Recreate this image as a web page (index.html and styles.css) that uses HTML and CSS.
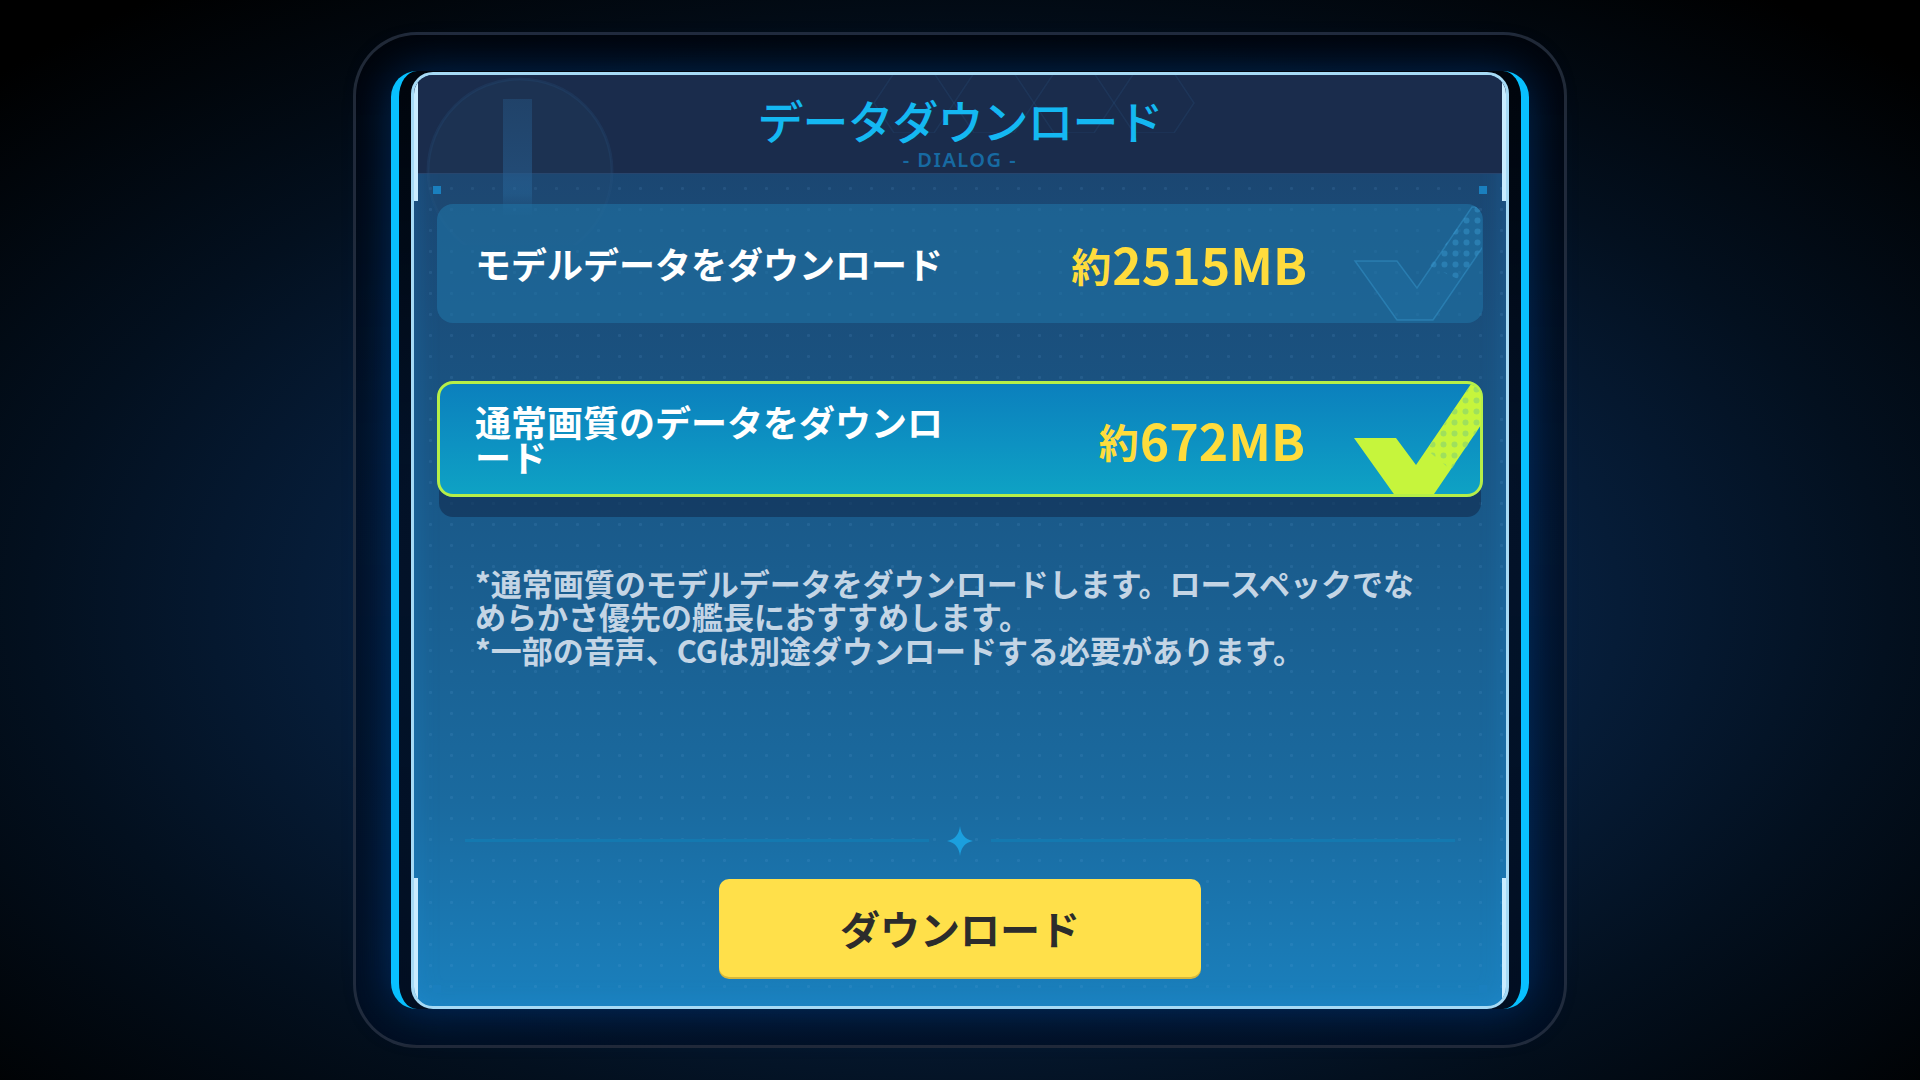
FILE: index.html
```html
<!DOCTYPE html>
<html lang="ja">
<head>
    <meta charset="UTF-8">
    <meta name="viewport" content="width=device-width, initial-scale=1.0">
    <title>データダウンロード</title>
    <link rel="stylesheet" href="styles.css">
</head>
<body>

    <div class="frame">
        <div class="shell">
            <div class="panel">
                <div class="panel-head">
                    <h1 class="title">データダウンロード</h1>
                    <div class="subtitle">- DIALOG -</div>
                </div>

                <!-- faint emblem and hex pattern over the header -->
                <svg class="emblem" width="220" height="170" viewBox="0 0 220 170">
                    <defs>
                        <linearGradient id="barFade" x1="0" y1="0" x2="0" y2="1">
                            <stop offset="0" stop-color="#24507c" stop-opacity="0.55"/>
                            <stop offset="0.65" stop-color="#275f92" stop-opacity="0.55"/>
                            <stop offset="0.8" stop-color="#2b73aa" stop-opacity="0.35"/>
                            <stop offset="1" stop-color="#2b73aa" stop-opacity="0"/>
                        </linearGradient>
                    </defs>
                    <circle cx="106" cy="96" r="92" fill="#27496f" fill-opacity="0.2" stroke="#2a5582" stroke-opacity="0.22" stroke-width="3"/>
                    <rect x="89" y="24" width="29" height="118" fill="url(#barFade)"/>
                </svg>
                <svg class="hexes" width="360" height="60" viewBox="0 0 360 60">
                    <g fill="none" stroke="#2d5a8a" stroke-opacity="0.2" stroke-width="1.5">
                        <path d="M20 30 L40 0 L80 0 L100 30 L80 60 L40 60 Z"/>
                        <path d="M100 30 L120 0 L160 0 L180 30 L160 60 L120 60 Z"/>
                        <path d="M180 30 L200 0 L240 0 L260 30 L240 60 L200 60 Z"/>
                        <path d="M260 30 L280 0 L320 0 L340 30 L320 60 L280 60 Z"/>
                    </g>
                </svg>

                <span class="pin pin-tl"></span>
                <span class="pin pin-tr"></span>
                <span class="pin pin-bl"></span>
                <span class="pin pin-br"></span>

                <div class="panel-body">
                    <div class="option">
                        <div class="option-label">モデルデータをダウンロード</div>
                        <div class="option-size"><span class="approx">約</span>2515MB</div>
                        <svg class="check check-off" width="142" height="119" viewBox="0 0 142 119">
                            <defs>
                                <pattern id="dotsOff" width="11" height="11" patternUnits="userSpaceOnUse">
                                    <circle cx="5.5" cy="5.5" r="3" fill="#3a9ad0" fill-opacity="0.45"/>
                                </pattern>
                            </defs>
                            <polygon points="15,57 57,57 77,84 132,3 170,3 93,116 57,116" fill="#2a86bd" fill-opacity="0.15" stroke="#3d9fd6" stroke-opacity="0.4" stroke-width="1.5"/>
                            <polygon points="90,62 132,3 170,3 120,76" fill="url(#dotsOff)"/>
                        </svg>
                    </div>

                    <div class="option option-on">
                        <div class="option-label">通常画質のデータをダウンロード</div>
                        <div class="option-size"><span class="approx">約</span>672MB</div>
                        <svg class="check check-on" width="142" height="110" viewBox="0 0 142 110">
                            <defs>
                                <pattern id="dotsOn" width="11" height="11" patternUnits="userSpaceOnUse">
                                    <circle cx="5.5" cy="5.5" r="3" fill="#8fd86a" fill-opacity="0.7"/>
                                </pattern>
                            </defs>
                            <polygon points="15,54 57,54 77,81 132,0 170,0 93,113 57,113" fill="#c6f53c"/>
                            <polygon points="88,66 132,0 170,0 112,86" fill="url(#dotsOn)"/>
                        </svg>
                    </div>

                    <p class="note">*通常画質のモデルデータをダウンロードします。ロースペックでなめらかさ優先の艦長におすすめします。<br>*一部の音声、CGは別途ダウンロードする必要があります。</p>

                    <div class="divider">
                        <span class="divider-line"></span>
                        <svg class="divider-star" width="26" height="30" viewBox="0 0 26 30">
                            <path d="M13 0 Q14.5 13 26 15 Q14.5 17 13 30 Q11.5 17 0 15 Q11.5 13 13 0 Z" fill="#1b9fde"/>
                        </svg>
                        <span class="divider-line"></span>
                    </div>

                    <button class="download-btn">ダウンロード</button>
                </div>
            </div>
        </div>
    </div>

</body>
</html>
```

FILE: styles.css
```css
body {
    margin: 0;
    height: 1080px;
    display: flex;
    justify-content: center;
    align-items: center;
    font-family: "Noto Sans CJK JP", "Noto Sans", sans-serif;
    background: radial-gradient(ellipse 78% 78% at 50% 56%, #0c2d56 0%, #07203f 38%, #03101f 62%, #000 90%);
    overflow: hidden;
}

/* thin dark outer rim */
.frame {
    box-sizing: border-box;
    width: 1214px;
    height: 1016px;
    border: 3px solid rgba(44, 54, 70, 0.75);
    border-radius: 64px;
    display: flex;
    justify-content: center;
    align-items: center;
    background: linear-gradient(180deg, rgba(0, 4, 10, 0.85) 0%, rgba(1, 12, 30, 0.7) 40%, rgba(1, 14, 34, 0.75) 100%);
}

/* cyan side rails */
.shell {
    box-sizing: border-box;
    width: 1138px;
    height: 938px;
    padding: 0 12px;
    border-left: 8px solid #08c0ff;
    border-right: 8px solid #08c0ff;
    border-radius: 26px;
    box-shadow: 0 0 46px rgba(0, 110, 230, 0.35);
    display: flex;
    align-items: center;
}

.panel {
    position: relative;
    box-sizing: border-box;
    width: 1098px;
    height: 937px;
    border: 3px solid #a6daf5;
    border-radius: 22px;
    overflow: hidden;
    display: flex;
    flex-direction: column;
    background: linear-gradient(180deg, #1b416b 0%, #1a5685 40%, #1a6a9f 78%, #1a80bd 100%);
    box-shadow: inset 0 0 24px rgba(40, 150, 230, 0.25);
}

/* thicker light edges at the top and bottom ends of the sides */
.panel::before,
.panel::after {
    content: "";
    position: absolute;
    left: 0;
    right: 0;
    border-left: 4px solid #c9ecff;
    border-right: 4px solid #c9ecff;
    pointer-events: none;
    z-index: 3;
}

.panel::before {
    top: 0;
    height: 126px;
}

.panel::after {
    bottom: 0;
    height: 128px;
}

.emblem {
    position: absolute;
    left: 0;
    top: 0;
    z-index: 1;
    pointer-events: none;
}

.hexes {
    position: absolute;
    left: 440px;
    top: -2px;
    z-index: 1;
    pointer-events: none;
}

.pin {
    position: absolute;
    width: 8px;
    height: 8px;
    background: #1a7fbe;
    z-index: 2;
}

.pin-tl { left: 19px; top: 111px; }
.pin-tr { right: 19px; top: 111px; }
.pin-bl { left: 19px; bottom: 13px; }
.pin-br { right: 19px; bottom: 13px; }

.panel-head {
    height: 98px;
    flex: none;
    display: flex;
    flex-direction: column;
    align-items: center;
    background: #1a2c4c;
    border-bottom: 1px solid rgba(70, 130, 190, 0.3);
}

.title {
    position: relative;
    z-index: 2;
    margin: 21px 0 0;
    font-size: 46px;
    font-weight: 500;
    line-height: 46px;
    color: #14b8f2;
    letter-spacing: -1px;
}

.subtitle {
    margin-top: 8px;
    font-family: "Noto Sans", sans-serif;
    font-size: 20px;
    font-weight: 600;
    line-height: 20px;
    letter-spacing: 1.5px;
    color: #176aa2;
}

.panel-body {
    position: relative;
    flex: 1;
    display: flex;
    flex-direction: column;
    padding: 30px 23px 29px;
    background-image: radial-gradient(circle, rgba(110, 175, 230, 0.12) 1.3px, transparent 1.8px);
    background-size: 21px 21px;
    background-position: 6px 4px;
}

.option {
    position: relative;
    z-index: 2;
    box-sizing: border-box;
    height: 119px;
    display: flex;
    align-items: center;
    justify-content: space-between;
    padding: 0 176px 0 38px;
    border-radius: 16px;
    overflow: hidden;
    background: rgba(31, 115, 165, 0.6);
}

.option-label {
    width: 490px;
    font-size: 36px;
    font-weight: 700;
    line-height: 35px;
    color: #fff;
}

.option-size {
    font-size: 50px;
    font-weight: 700;
    line-height: 1;
    color: #ffdc3c;
    white-space: nowrap;
}

.approx {
    font-size: 40px;
    margin-right: 1px;
    position: relative;
    top: -3px;
}

.check {
    position: absolute;
    left: 903px;
    top: 0;
}

.option-on {
    margin-top: 58px;
    height: 116px;
    padding: 0 175px 0 35px;
    border: 3px solid #b6ef48;
    background: linear-gradient(180deg, #0b80bd 0%, #0d92c2 55%, #0ea2c4 100%);
    box-shadow: 0 22px 0 -2px rgba(16, 44, 78, 0.6);
    overflow: visible;
}

.option-on .check {
    left: 899px;
    border-radius: 0 14px 14px 0;
}

.note {
    margin: 69px 0 0 38px;
    width: 960px;
    font-size: 31px;
    font-weight: 700;
    line-height: 33.5px;
    color: #c4d5e5;
}

.divider {
    margin-top: auto;
    height: 30px;
    display: flex;
    align-items: center;
    padding: 0 28px;
}

.divider-line {
    flex: 1;
    height: 3px;
    background: #1479b0;
}

.divider-star {
    margin: 0 18px;
}

.download-btn {
    align-self: center;
    margin-top: 23px;
    width: 482px;
    height: 98px;
    border: none;
    border-radius: 10px;
    background: #ffe04a;
    box-shadow: 0 2px 0 #d8b83a;
    font-family: "Noto Sans CJK JP", sans-serif;
    font-size: 40px;
    font-weight: 700;
    color: #2c2c2c;
    cursor: pointer;
}
```
